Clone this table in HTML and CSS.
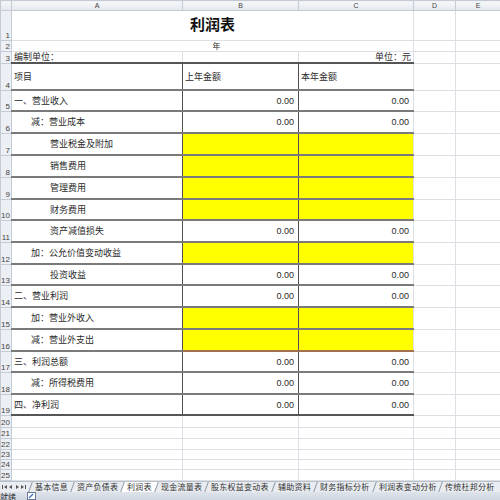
FILE: index.html
```html
<!DOCTYPE html>
<html lang="zh">
<head>
<meta charset="utf-8">
<title>利润表</title>
<link rel="stylesheet" href="styles.css">
</head>
<body>
<div class="app">
  <div class="sheet">
    <table class="grid">
      <colgroup>
        <col class="c-rh"><col class="c-a"><col class="c-b"><col class="c-c"><col class="c-d"><col class="c-e">
      </colgroup>
      <thead>
        <tr class="hdr"><th class="corner"></th><th>A</th><th>B</th><th>C</th><th>D</th><th>E</th></tr>
      </thead>
      <tbody>
        <tr class="h30"><th class="rn">1</th><td colspan="3" class="title">利润表</td><td></td><td></td></tr>
        <tr class="h10"><th class="rn">2</th><td colspan="3" class="year">年</td><td></td><td></td></tr>
        <tr class="h11"><th class="rn">3</th><td class="top">编制单位：</td><td class="top"></td><td class="top unit">单位：元</td><td></td><td></td></tr>
        <tr class="h27"><th class="rn">4</th><td class="t ta">项目</td><td class="t tb">上年金额</td><td class="t">本年金额</td><td></td><td></td></tr>
        <tr class="h21"><th class="rn">5</th><td class="t ta">一、营业收入</td><td class="t tb num">0.00</td><td class="t num">0.00</td><td></td><td></td></tr>
        <tr class="h22"><th class="rn">6</th><td class="t ta i1">减：营业成本</td><td class="t tb num">0.00</td><td class="t num">0.00</td><td></td><td></td></tr>
        <tr class="h22"><th class="rn">7</th><td class="t ta i2">营业税金及附加</td><td class="t tb y"></td><td class="t y"></td><td></td><td></td></tr>
        <tr class="h22"><th class="rn">8</th><td class="t ta i2">销售费用</td><td class="t tb y"></td><td class="t y"></td><td></td><td></td></tr>
        <tr class="h22"><th class="rn">9</th><td class="t ta i2">管理费用</td><td class="t tb y"></td><td class="t y"></td><td></td><td></td></tr>
        <tr class="h21"><th class="rn">10</th><td class="t ta i2">财务费用</td><td class="t tb y"></td><td class="t y"></td><td></td><td></td></tr>
        <tr class="h22"><th class="rn">11</th><td class="t ta i2">资产减值损失</td><td class="t tb num">0.00</td><td class="t num">0.00</td><td></td><td></td></tr>
        <tr class="h22"><th class="rn">12</th><td class="t ta i1">加：公允价值变动收益</td><td class="t tb y"></td><td class="t y"></td><td></td><td></td></tr>
        <tr class="h21"><th class="rn">13</th><td class="t ta i2">投资收益</td><td class="t tb num">0.00</td><td class="t num">0.00</td><td></td><td></td></tr>
        <tr class="h22"><th class="rn">14</th><td class="t ta">二、营业利润</td><td class="t tb num">0.00</td><td class="t num">0.00</td><td></td><td></td></tr>
        <tr class="h22"><th class="rn">15</th><td class="t ta i1">加：营业外收入</td><td class="t tb y yr"></td><td class="t y yr"></td><td></td><td></td></tr>
        <tr class="h22"><th class="rn">16</th><td class="t ta i1">减：营业外支出</td><td class="t tb y yb"></td><td class="t y yb"></td><td></td><td></td></tr>
        <tr class="h21"><th class="rn">17</th><td class="t ta">三、利润总额</td><td class="t tb num">0.00</td><td class="t num">0.00</td><td></td><td></td></tr>
        <tr class="h22"><th class="rn">18</th><td class="t ta i1">减：所得税费用</td><td class="t tb num">0.00</td><td class="t num">0.00</td><td></td><td></td></tr>
        <tr class="h21"><th class="rn">19</th><td class="t ta last">四、净利润</td><td class="t tb num last">0.00</td><td class="t num last">0.00</td><td></td><td></td></tr>
        <tr class="h12"><th class="rn">20</th><td></td><td></td><td></td><td></td><td></td></tr>
        <tr class="h11"><th class="rn">21</th><td></td><td></td><td></td><td></td><td></td></tr>
        <tr class="h11"><th class="rn">22</th><td></td><td></td><td></td><td></td><td></td></tr>
        <tr class="h10"><th class="rn">23</th><td></td><td></td><td></td><td></td><td></td></tr>
        <tr class="h10"><th class="rn">24</th><td></td><td></td><td></td><td></td><td></td></tr>
        <tr class="h11"><th class="rn">25</th><td></td><td></td><td></td><td></td><td></td></tr>
        <tr class="h11"><th class="rn">26</th><td></td><td></td><td></td><td></td><td></td></tr>
      </tbody>
    </table>
  </div>
  <div class="tabbar">
    <svg class="nav" width="28" height="10" viewBox="0 0 28 10">
      <rect x="2" y="3" width="1" height="4" fill="#555"/>
      <polygon points="7,3 7,7 4,5" fill="#555"/>
      <polygon points="12,3 12,7 9,5" fill="#555"/>
      <polygon points="16,3 16,7 19,5" fill="#555"/>
      <polygon points="21,3 21,7 24,5" fill="#555"/>
      <rect x="25" y="3" width="1" height="4" fill="#555"/>
    </svg>
    <span class="tab"><span class="tl">基本信息</span></span>
    <span class="tab"><span class="tl">资产负债表</span></span>
    <span class="tab active"><span class="tl">利润表</span></span>
    <span class="tab"><span class="tl">现金流量表</span></span>
    <span class="tab"><span class="tl">股东权益变动表</span></span>
    <span class="tab"><span class="tl">辅助资料</span></span>
    <span class="tab"><span class="tl">财务指标分析</span></span>
    <span class="tab"><span class="tl">利润表变动分析</span></span>
    <span class="tab"><span class="tl">传统杜邦分析</span></span>
  </div>
  <div class="status">
    <span class="ready">就绪</span>
    <svg class="sicon" width="9" height="8" viewBox="0 0 9 8">
      <rect x="0.5" y="0.5" width="8" height="7" fill="#fff" stroke="#6b7b95"/>
      <path d="M2 6 L6 2" stroke="#3a6fc4" stroke-width="1.2"/>
    </svg>
  </div>
</div>
</body>
</html>
```
FILE: styles.css
```css
html, body {
  margin: 0;
  padding: 0;
  background: #ffffff;
}
.app {
  width: 500px;
  height: 500px;
  display: flex;
  flex-direction: column;
  overflow: hidden;
  font-family: "Noto Sans CJK SC", "Liberation Sans", sans-serif;
  color: #222;
}
.sheet {
  height: 481px;
  overflow: hidden;
  flex: none;
}
.grid {
  table-layout: fixed;
  border-collapse: collapse;
  width: 500px;
}
.c-rh { width: 11px; }
.c-a { width: 171px; }
.c-b { width: 116px; }
.c-c { width: 115px; }
.c-d { width: 42px; }
.c-e { width: 45px; }

.grid td {
  border: 1px solid #dcdfe3;
  padding: 0 2px;
  font-size: 9px;
  line-height: 10px;
  white-space: nowrap;
  overflow: hidden;
  vertical-align: middle;
  color: #2a2a2a;
}
.hdr th {
  height: 9px;
  padding: 0;
  font-size: 7px;
  line-height: 9px;
  font-weight: normal;
  color: #444;
  font-family: "Liberation Sans", sans-serif;
  background: linear-gradient(#f7f8fa, #e4e8ee);
  border: 1px solid #c5cbd4;
  text-align: center;
}
.rn {
  padding: 0 1px 0 0;
  font-size: 8px;
  line-height: 8px;
  font-weight: normal;
  color: #444;
  font-family: "Liberation Sans", sans-serif;
  background: #eceff3;
  border: 1px solid #c5cbd4;
  text-align: right;
  vertical-align: bottom;
  overflow: hidden;
  white-space: nowrap;
  direction: rtl;
}
.h30 { height: 30px; }
.h27 { height: 27px; }
.h22 { height: 22px; }
.h21 { height: 21px; }
.h12 { height: 12px; }
.h11 { height: 11px; }
.h10 { height: 10px; }

.grid .title {
  text-align: center;
  font-size: 15px;
  line-height: 16px;
  font-weight: bold;
  color: #111;
  padding-bottom: 4px;
}
.grid .year {
  text-align: center;
  font-size: 8px;
  padding-left: 10px;
}
.grid .top {
  border-bottom: 2px solid #555;
  vertical-align: bottom;
  font-size: 9px;
}
.unit { text-align: right; }

.grid .t {
  border-bottom: 2px solid #7a7a7a;
  border-top: 2px solid #7a7a7a;
}
.grid .ta, .grid .tb { border-right: 1px solid #505050; }
.grid .ta { padding-left: 2px; }
.grid .i1 { padding-left: 19px; }
.grid .i2 { padding-left: 38px; }
.grid .num {
  text-align: right;
  font-family: "Liberation Sans", sans-serif;
  font-size: 9px;
  padding-right: 4px;
}
.grid .y { background: #ffff00; }
.grid .yr { border-top: 2px solid #a2704e; }
.grid .yb { border-bottom: 2px solid #a2704e; }
.grid .last { border-bottom: 2px solid #555; }

.tabbar {
  height: 10px;
  flex: none;
  display: flex;
  align-items: stretch;
  background: #e9ecf0;
  border-top: 1px solid #b9c0ca;
  font-size: 8px;
  line-height: 10px;
  white-space: nowrap;
  overflow: hidden;
}
.nav {
  flex: none;
  margin-right: 2px;
}
.tab {
  flex: none;
  padding: 0 4px;
  border-left: 1px solid #8d96a3;
  color: #333;
  letter-spacing: 0.25px;
  transform: skewX(-20deg);
}
.tl {
  display: inline-block;
  transform: skewX(20deg);
}
.tab.active {
  background: #ffffff;
}
.status {
  flex: 1;
  display: flex;
  align-items: center;
  gap: 11px;
  background: linear-gradient(#dfe4eb, #cfd6df);
  font-size: 8px;
  line-height: 9px;
  color: #333;
  overflow: hidden;
}
.ready { margin-left: 0; }
.sicon { flex: none; }
```
